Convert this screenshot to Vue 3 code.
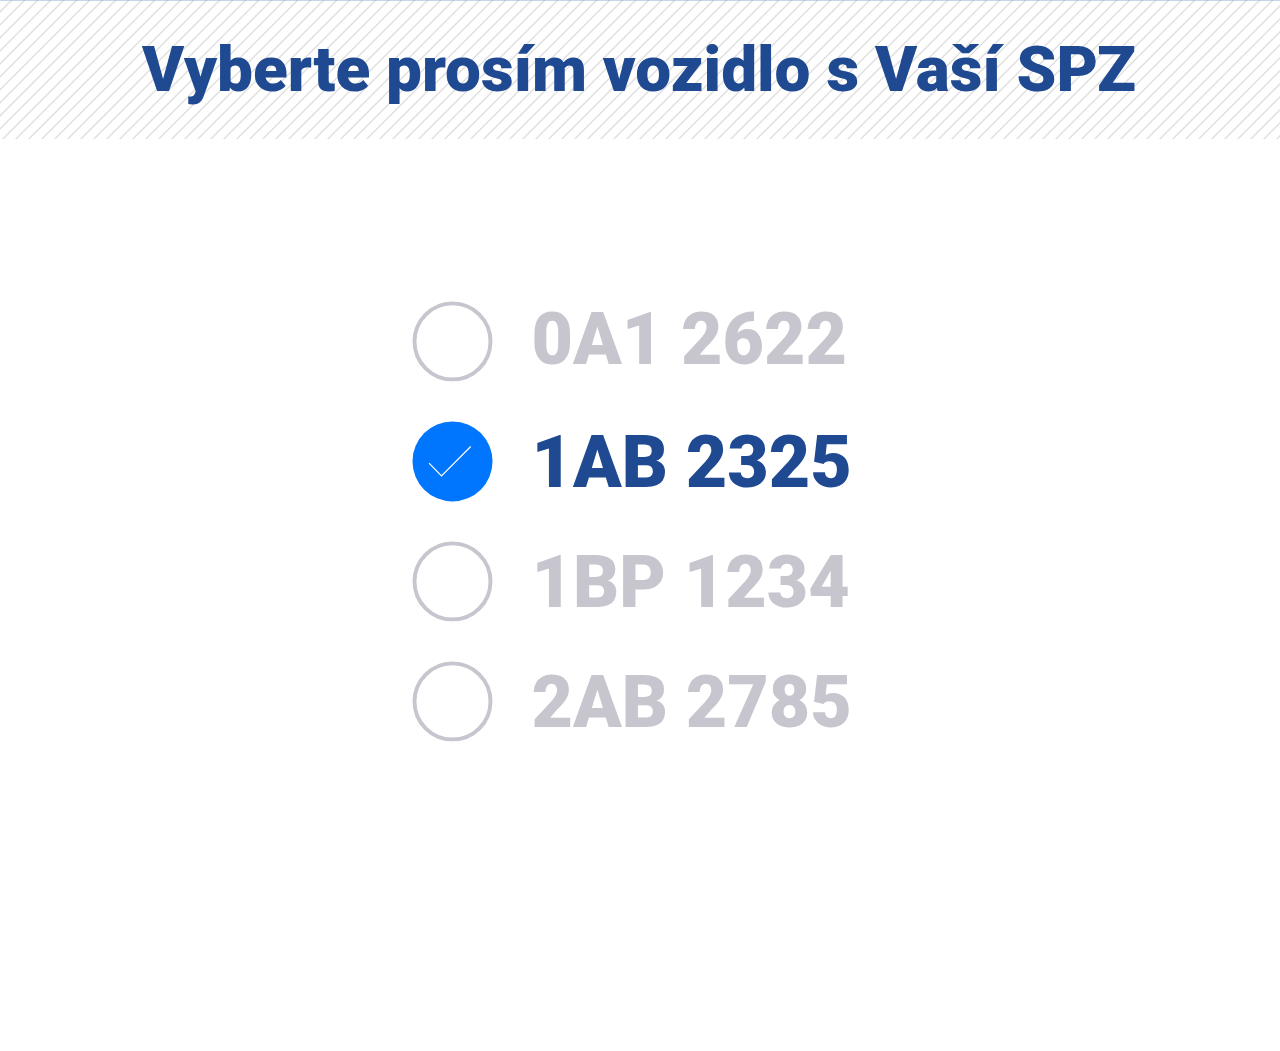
<script setup>
const plates = [
  { text: '0A1 2622', active: false },
  { text: '1AB 2325', active: true },
  { text: '1BP 1234', active: false },
  { text: '2AB 2785', active: false },
]
</script>

<template>
  <main class="page">
    <header class="header">
      <svg class="stripes" width="1280" height="139" aria-hidden="true">
        <defs>
          <pattern id="hatch" width="13" height="13" x="-1.200" patternUnits="userSpaceOnUse">
            <path d="M-2 15L15 -2M-2 2L2 -2M11 15L15 11" stroke="#d6d6d6" stroke-width="1.200" />
          </pattern>
        </defs>
        <rect width="1280" height="139" fill="url(#hatch)" />
        <rect width="1280" height="1" fill="#7fa3d3" fill-opacity="0.450" />
      </svg>
      <h1 class="title">Vyberte prosím vozidlo s Vaší SPZ</h1>
    </header>
    <ul class="list">
      <li v-for="p in plates" :key="p.text" class="item" :class="{ active: p.active }">
        <svg class="radio" width="80" height="80" viewBox="0 0 80 80" aria-hidden="true">
          <template v-if="p.active">
            <circle cx="40.500" cy="40.400" r="40" fill="#0076ff" />
            <path d="M17 42.200L29.500 54.900L58.700 25.500" fill="none" stroke="#fff" stroke-width="1.200" />
          </template>
          <circle v-else cx="40.500" cy="40.400" r="38" fill="none" stroke="#c7c6ce" stroke-width="3.900" />
        </svg>
        <span class="plate">{{ p.text }}</span>
      </li>
    </ul>
  </main>
</template>

<style>
body { margin: 0; background: #fff; }
</style>

<style scoped>
.page { width: 1280px; height: 1051px; overflow: hidden; font-family: Roboto, sans-serif; }
.header { position: relative; height: 139px; display: flex; justify-content: center; padding-right: 2px; box-sizing: border-box; }
.stripes { position: absolute; inset: 0; }
.title { position: relative; margin: 0; font-size: 63.850px; line-height: 140px; font-weight: 900; color: #1f4a92; white-space: nowrap; }
.list { list-style: none; margin: 0; padding: 162px 0 0 412px; display: flex; flex-direction: column; gap: 40px; }
.item { display: flex; align-items: center; gap: 40px; height: 80px; color: #c7c6ce; }
.radio { display: block; overflow: visible; }
.plate { font-size: 71.600px; line-height: 80px; font-weight: 900; white-space: nowrap; padding-top: 4px; margin-left: -0.500px; }
.item:first-child .plate { padding: 0 0 2px; }
.active { color: #1f4a92; }
</style>
